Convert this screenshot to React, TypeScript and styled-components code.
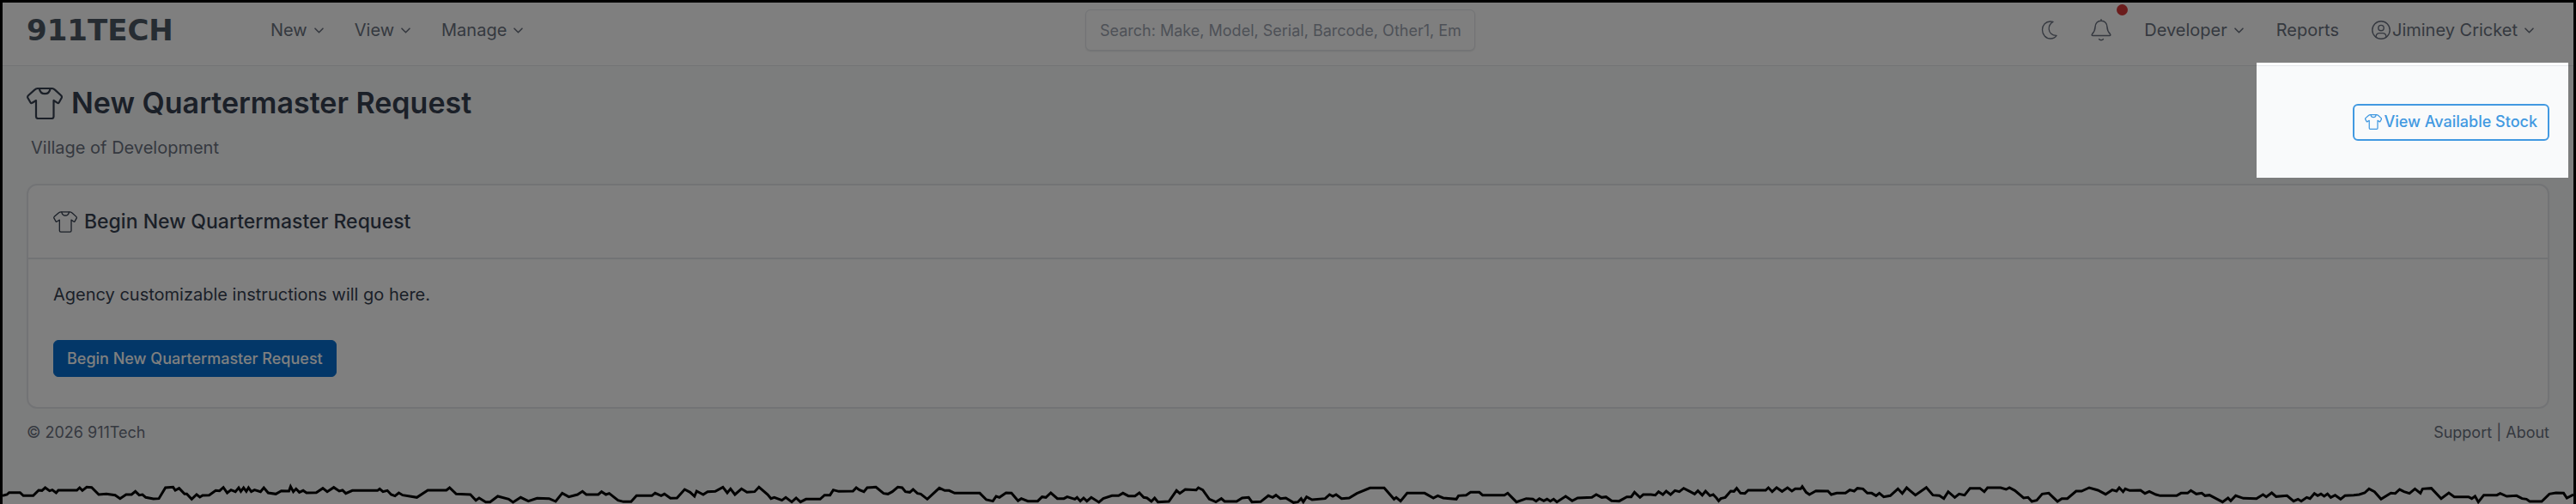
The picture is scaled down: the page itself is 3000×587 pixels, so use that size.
import React from "react";
import styled, { createGlobalStyle } from "styled-components";

const colors = {
  body: "#374151",
  muted: "#6b7280",
  placeholder: "#9ca3af",
  line: "#e5e7eb",
  surface: "#ffffff",
  page: "#f9fafb",
  primary: "#066fd1",
  azure: "#4299e1",
  danger: "#d63939",
  logo: "#4c5864",
};

const GlobalStyle = createGlobalStyle`
  *, *::before, *::after { box-sizing: border-box; }
  body {
    margin: 0;
    background: #808080;
    color: ${colors.body};
    font-family: Inter, "Liberation Sans", sans-serif;
    font-size: 20px;
    line-height: 28px;
  }
`;

const Page = styled.div`
  position: relative;
  display: flex;
  flex-direction: column;
  min-height: 100vh;
  overflow: hidden;
  border: 3px solid #000;
  border-bottom: 0;
  background: ${colors.page};
`;

const Header = styled.header`
  display: flex;
  align-items: center;
  padding: 8px 46px 17px 28px;
  border-bottom: 1px solid ${colors.line};
  background: ${colors.surface};
`;

const NavGroup = styled.nav<{ $end?: boolean }>`
  display: flex;
  flex: 1 1 0;
  align-items: center;
  justify-content: ${(p) => (p.$end ? "flex-end" : "flex-start")};
  gap: ${(p) => (p.$end ? 38 : 36)}px;
`;

const Logo = styled.a`
  width: 248px;
  color: ${colors.logo};
  font-family: "DejaVu Sans", sans-serif;
  font-size: 34px;
  font-weight: 700;
  line-height: 32px;
  text-decoration: none;
`;

const NavButton = styled.button`
  position: relative;
  display: inline-flex;
  align-items: center;
  gap: 8px;
  padding: 0;
  border: 0;
  background: none;
  color: ${colors.muted};
  font: inherit;
  cursor: pointer;
`;

const NavLink = styled.a`
  color: ${colors.muted};
  text-decoration: none;
`;

const UserName = styled.span`
  display: inline-flex;
  align-items: center;
  gap: 2px;
`;

const NotificationDot = styled.span`
  position: absolute;
  top: -17px;
  left: 30px;
  width: 13px;
  height: 13px;
  border-radius: 50%;
  background: ${colors.danger};
`;

const Search = styled.input`
  width: 454px;
  height: 48px;
  padding: 0 16px;
  border: 1px solid ${colors.line};
  border-radius: 6px;
  background: ${colors.surface};
  box-shadow: 0 1px 2px rgba(31, 41, 55, 0.12);
  color: ${colors.body};
  font: inherit;
  font-size: 18px;
  &::placeholder {
    color: ${colors.placeholder};
    opacity: 1;
  }
`;

const Main = styled.main`
  padding: 0 28px;
`;

const PageHeader = styled.div`
  display: flex;
  align-items: center;
  justify-content: space-between;
  padding: 21px 0 28px;
`;

const PageTitle = styled.h1`
  display: flex;
  align-items: center;
  gap: 10px;
  margin: 0 0 16px;
  font-size: 34px;
  font-weight: 600;
  line-height: 44px;
`;

const Agency = styled.p`
  margin: 0;
  padding-left: 5px;
  color: ${colors.muted};
`;

const Button = styled.button<{ $outline?: boolean }>`
  display: inline-flex;
  align-items: center;
  gap: 2px;
  height: 43px;
  padding: 0 ${(p) => (p.$outline ? 12 : 15)}px;
  border: ${(p) => (p.$outline ? `2px solid ${colors.azure}` : `1px solid ${colors.primary}`)};
  border-radius: 6px;
  background: ${(p) => (p.$outline ? "transparent" : colors.primary)};
  color: ${(p) => (p.$outline ? colors.azure : "#fff")};
  font: inherit;
  font-size: 18px;
  font-weight: 500;
  cursor: pointer;
`;

const Card = styled.section`
  border: 2px solid ${colors.line};
  border-radius: 12px;
  background: ${colors.surface};
`;

const CardHeader = styled.div`
  padding: 28px 29px;
  border-bottom: 2px solid ${colors.line};
`;

const CardTitle = styled.h2`
  display: flex;
  align-items: center;
  gap: 8px;
  margin: 0;
  font-size: 23px;
  font-weight: 500;
  line-height: 28px;
`;

const CardBody = styled.div`
  padding: 27px 29px 35px;
`;

const Instructions = styled.p`
  margin: 0 0 39px;
`;

const Footer = styled.footer`
  display: flex;
  justify-content: space-between;
  padding: 14px 28px;
  color: ${colors.muted};
  font-size: 18px;
`;

const FooterLink = styled.a`
  color: inherit;
  text-decoration: none;
`;

/* Dims everything except the area it covers. */
const Spotlight = styled.div`
  position: absolute;
  top: 70px;
  right: 6px;
  z-index: 1;
  width: 363px;
  height: 134px;
  box-shadow: 0 0 0 4000px rgba(0, 0, 0, 0.5);
  pointer-events: none;
`;

const TornEdge = styled.svg`
  position: relative;
  z-index: 2;
  display: block;
  width: 100%;
  height: 47px;
  margin-top: auto;
`;

const Icon = styled.svg`
  flex: none;
  fill: none;
  stroke: currentColor;
  stroke-linecap: round;
  stroke-linejoin: round;
`;

const Chevron = () => (
  <Icon width="11" height="7" viewBox="0 0 11 7" strokeWidth="1.6" aria-hidden="true">
    <path d="M1 1.2 5.5 5.8 10 1.2" />
  </Icon>
);

const Shirt = ({ width, height, weight }: { width: number; height: number; weight: number }) => (
  <Icon width={width} height={height} viewBox="0 0 42 37" strokeWidth={weight} aria-hidden="true">
    <path d="M14 1H28.5C30.5 1 31.5 1.4 33 2.6L40.2 9.3C41.2 10.3 41.2 11 40.7 12L37.8 17.2C37.2 18.3 36.6 18.4 35.6 17.7L31.5 15V33.8C31.5 35.3 30.8 36 29.3 36H13.2C11.7 36 11 35.3 11 33.8V15L6.6 17.7C5.6 18.4 5 18.3 4.4 17.2L1.4 12C.9 11 .9 10.3 1.9 9.3L9.3 2.6C10.8 1.4 12 1 14 1Z" />
    <path d="M14.8 1.3C15.4 5 17.8 7.2 21.2 7.2C24.6 7.2 27 5 27.6 1.3" />
  </Icon>
);

const Moon = () => (
  <Icon width="20" height="22" viewBox="0 0 19 22" strokeWidth="1.3" aria-hidden="true">
    <path d="M13.5 1.4C10 3.5 8.5 6.5 8.7 10C9 14.2 12.2 17.6 17.6 17.4C15.8 20 13 21 10.5 21C5 21 1 16.5 1 10.8C1 5.2 5 1 10.2 1C11.5 1 12.7 1.1 13.5 1.4Z" />
  </Icon>
);

const Bell = () => (
  <Icon width="24" height="26" viewBox="0 0 24 26" strokeWidth="1.5" aria-hidden="true">
    <path d="M12 .8V2.2C7.8 2.2 5.2 5.4 5 9.6C4.9 13.6 3.6 15.6 1.6 17.6C.7 18.7 1.1 19.6 2.4 19.6H21.6C22.9 19.6 23.3 18.7 22.4 17.6C20.4 15.6 19.1 13.6 19 9.6C18.8 5.4 16.2 2.2 12 2.2" />
    <path d="M9.6 23.6C10.4 25 13.6 25 14.4 23.6" />
  </Icon>
);

const UserCircle = () => (
  <Icon width="22" height="22" viewBox="0 0 22 22" strokeWidth="1.4" aria-hidden="true">
    <circle cx="11" cy="11" r="10.2" />
    <circle cx="11" cy="8.6" r="3.2" />
    <path d="M5 19C5.2 16 7 14.6 9.2 14.6H12.8C15 14.6 16.8 16 17 19" />
  </Icon>
);

const tear =
  "0,112 8,108 12,101 32,101 38,112 56,112 66,93 72,94 78,84 86,95 91,92 98,102 102,93 136,93 141,84 146,94 154,82 163,83 176,108 190,106 206,110 215,122 226,108 236,108 243,97 250,110 256,108 262,118 276,123 286,122 298,84 312,82 316,93 323,86 333,106 337,106 346,124 355,108 361,117 366,111 378,110 390,94 397,95 404,83 411,102 418,92 426,98 432,84 436,97 441,84 446,97 450,84 455,98 461,92 472,98 478,84 486,102 500,106 510,95 524,96 527,80 532,98 537,88 543,100 550,94 556,102 574,101 586,86 594,98 606,83 616,96 622,93 628,104 640,94 686,94 690,88 696,98 704,94 711,108 718,113 725,102 732,110 758,118 778,93 812,93 818,84 830,106 856,108 866,128 872,120 884,134 892,134 906,114 926,124 934,135 948,118 962,131 978,121 1000,122 1012,132 1024,103 1036,116 1052,108 1061,97 1068,108 1090,108 1096,98 1104,108 1110,104 1126,128 1136,133 1150,133 1160,112 1188,112 1194,103 1205,112 1211,106 1222,121 1234,120 1248,90 1258,100 1266,114 1270,96 1282,108 1290,98 1304,97 1318,82 1326,102 1332,88 1340,108 1352,88 1362,100 1376,98 1384,82 1400,108 1406,122 1412,118 1426,128 1433,118 1444,134 1452,120 1460,134 1470,124 1496,124 1504,110 1514,110 1520,92 1530,97 1556,96 1562,84 1568,92 " +
  "1576,98 1582,84 1598,82 1612,104 1620,106 1628,98 1638,82 1646,84 1652,98 1660,100 1666,90 1674,104 1680,106 1692,124 1714,85 1724,94 1732,94 1742,103 1788,103 1800,126 1812,131 1818,114 1824,118 1836,102 1846,103 1858,130 1864,122 1876,131 1894,131 1902,116 1909,118 1918,102 1930,122 1942,122 1948,116 1962,124 1966,118 1972,131 1978,120 1984,131 1992,118 2006,135 2014,122 2030,112 2042,112 2050,103 2060,113 2072,113 2080,102 2088,118 2094,120 2102,132 2108,120 2114,134 2134,132 2148,94 2154,104 2164,90 2184,92 2188,84 2196,92 2208,124 2220,134 2230,122 2236,132 2258,132 2268,120 2280,118 2286,134 2302,133 2316,112 2324,118 2330,110 2338,122 2348,120 2362,136 2370,134 2376,122 2380,134 2386,116 2396,126 2420,122 2428,108 2434,114 2440,108 2450,122 2464,120 2478,104 2502,85 2528,85 2546,124 2550,118 2558,131 2570,103 2602,103 2618,120 2626,112 2636,120 2660,124 2664,112 2678,110 2686,100 2702,100 2708,110 2748,110 2754,103 2770,134 2788,122 2800,124 2806,131 2812,122 2820,130 2826,124 2832,131 2838,124 2844,134 2860,114 2872,130 2882,120 2908,118 2916,108 2926,118 2934,116 2944,130 2958,131 2972,116 2980,116 2986,100 2996,118 3002,108 3016,108 3024,110 3030,98 3038,108 3044,96 3052,108 3060,94 3068,98 3076,86 3088,98 3096,106 3102,95 3110,110 3116,96 3124,112 3130,108 3136,120 " +
  "3140,130 3144,122 3152,118 3162,96 3168,97 3173,86 3180,103 3188,104 3194,93 3226,93 3231,84 3238,98 3246,84 3256,97 3266,84 3274,96 3280,88 3290,88 3293,80 3300,100 3306,108 3318,95 3340,96 3346,108 3356,103 3372,103 3380,92 3388,96 3394,86 3404,88 3412,103 3420,103 3428,112 3434,103 3442,116 3454,112 3468,88 3476,104 3484,84 3490,94 3500,110 3520,83 3532,110 3544,112 3552,122 3560,98 3572,118 3580,106 3590,110 3600,86 3618,86 3626,98 3632,84 3656,84 3666,90 3672,84 3682,94 3698,120 3706,118 3713,132 3722,128 3732,106 3744,103 3760,132 3768,122 3778,122 3794,96 3804,96 3818,84 3834,93 3848,107 3860,92 3868,96 3873,84 3880,98 3884,88 3892,94 3912,93 3920,104 3928,97 3940,108 3948,112 3978,112 3986,103 3998,103 4004,94 4014,106 4024,103 4030,112 4038,110 4050,122 4062,134 4072,120 4077,130 4086,112 4100,121 4124,122 4136,108 4142,116 4152,102 4160,115 4180,112 4192,131 4200,124 4206,131 4216,118 4222,122 4230,104 4236,112 4242,106 4248,114 4254,106 4260,118 4268,110 4278,124 4286,112 4302,110 4312,108 4322,102 4330,88 4340,98 4352,124 4370,103 4378,104 4386,90 4394,98 4404,104 4414,88 4424,103 4428,88 4444,86 4462,122 4476,102 4486,116 4512,116 4518,122 4524,114 4530,134 4540,110 4564,110 4570,104 4582,114 4600,112 4610,122 4618,124 4624,132 4646,132 4660,106 4672,102 4686,103 4692,120 4704,108";

const menus = ["New", "View", "Manage"];

export default function App() {
  return (
    <Page>
      <GlobalStyle />
      <Header>
        <NavGroup aria-label="Primary">
          <Logo href="#">911TECH</Logo>
          {menus.map((label) => (
            <NavButton key={label} type="button" aria-haspopup="menu">
              {label}
              <Chevron />
            </NavButton>
          ))}
        </NavGroup>
        <Search type="text" aria-label="Search equipment" placeholder="Search: Make, Model, Serial, Barcode, Other1, Employee" />
        <NavGroup $end aria-label="Account">
          <NavButton type="button" aria-label="Toggle dark mode">
            <Moon />
          </NavButton>
          <NavButton type="button" aria-label="Notifications">
            <Bell />
            <NotificationDot />
          </NavButton>
          <NavButton type="button" aria-haspopup="menu">
            Developer
            <Chevron />
          </NavButton>
          <NavLink href="#reports">Reports</NavLink>
          <NavButton type="button" aria-haspopup="menu">
            <UserName>
              <UserCircle />
              Jiminey Cricket
            </UserName>
            <Chevron />
          </NavButton>
        </NavGroup>
      </Header>

      <Main>
        <PageHeader>
          <div>
            <PageTitle>
              <Shirt width={42} height={37} weight={2.2} />
              New Quartermaster Request
            </PageTitle>
            <Agency>Village of Development</Agency>
          </div>
          <Button type="button" $outline>
            <Shirt width={20} height={18} weight={2.6} />
            View Available Stock
          </Button>
        </PageHeader>

        <Card>
          <CardHeader>
            <CardTitle>
              <Shirt width={28} height={25} weight={2} />
              Begin New Quartermaster Request
            </CardTitle>
          </CardHeader>
          <CardBody>
            <Instructions>Agency customizable instructions will go here.</Instructions>
            <Button type="button">Begin New Quartermaster Request</Button>
          </CardBody>
        </Card>
      </Main>

      <Footer>
        <span>© 2026 911Tech</span>
        <span>
          <FooterLink href="#support">Support</FooterLink> | <FooterLink href="#about">About</FooterLink>
        </span>
      </Footer>

      <Spotlight />
      <TornEdge viewBox="0 0 4704 141" preserveAspectRatio="none" aria-hidden="true">
        <polygon points={`${tear} 4704,141 0,141`} fill="#808080" />
        <polyline points={tear} fill="none" stroke="#000" strokeWidth="3" vectorEffect="non-scaling-stroke" />
      </TornEdge>
    </Page>
  );
}
